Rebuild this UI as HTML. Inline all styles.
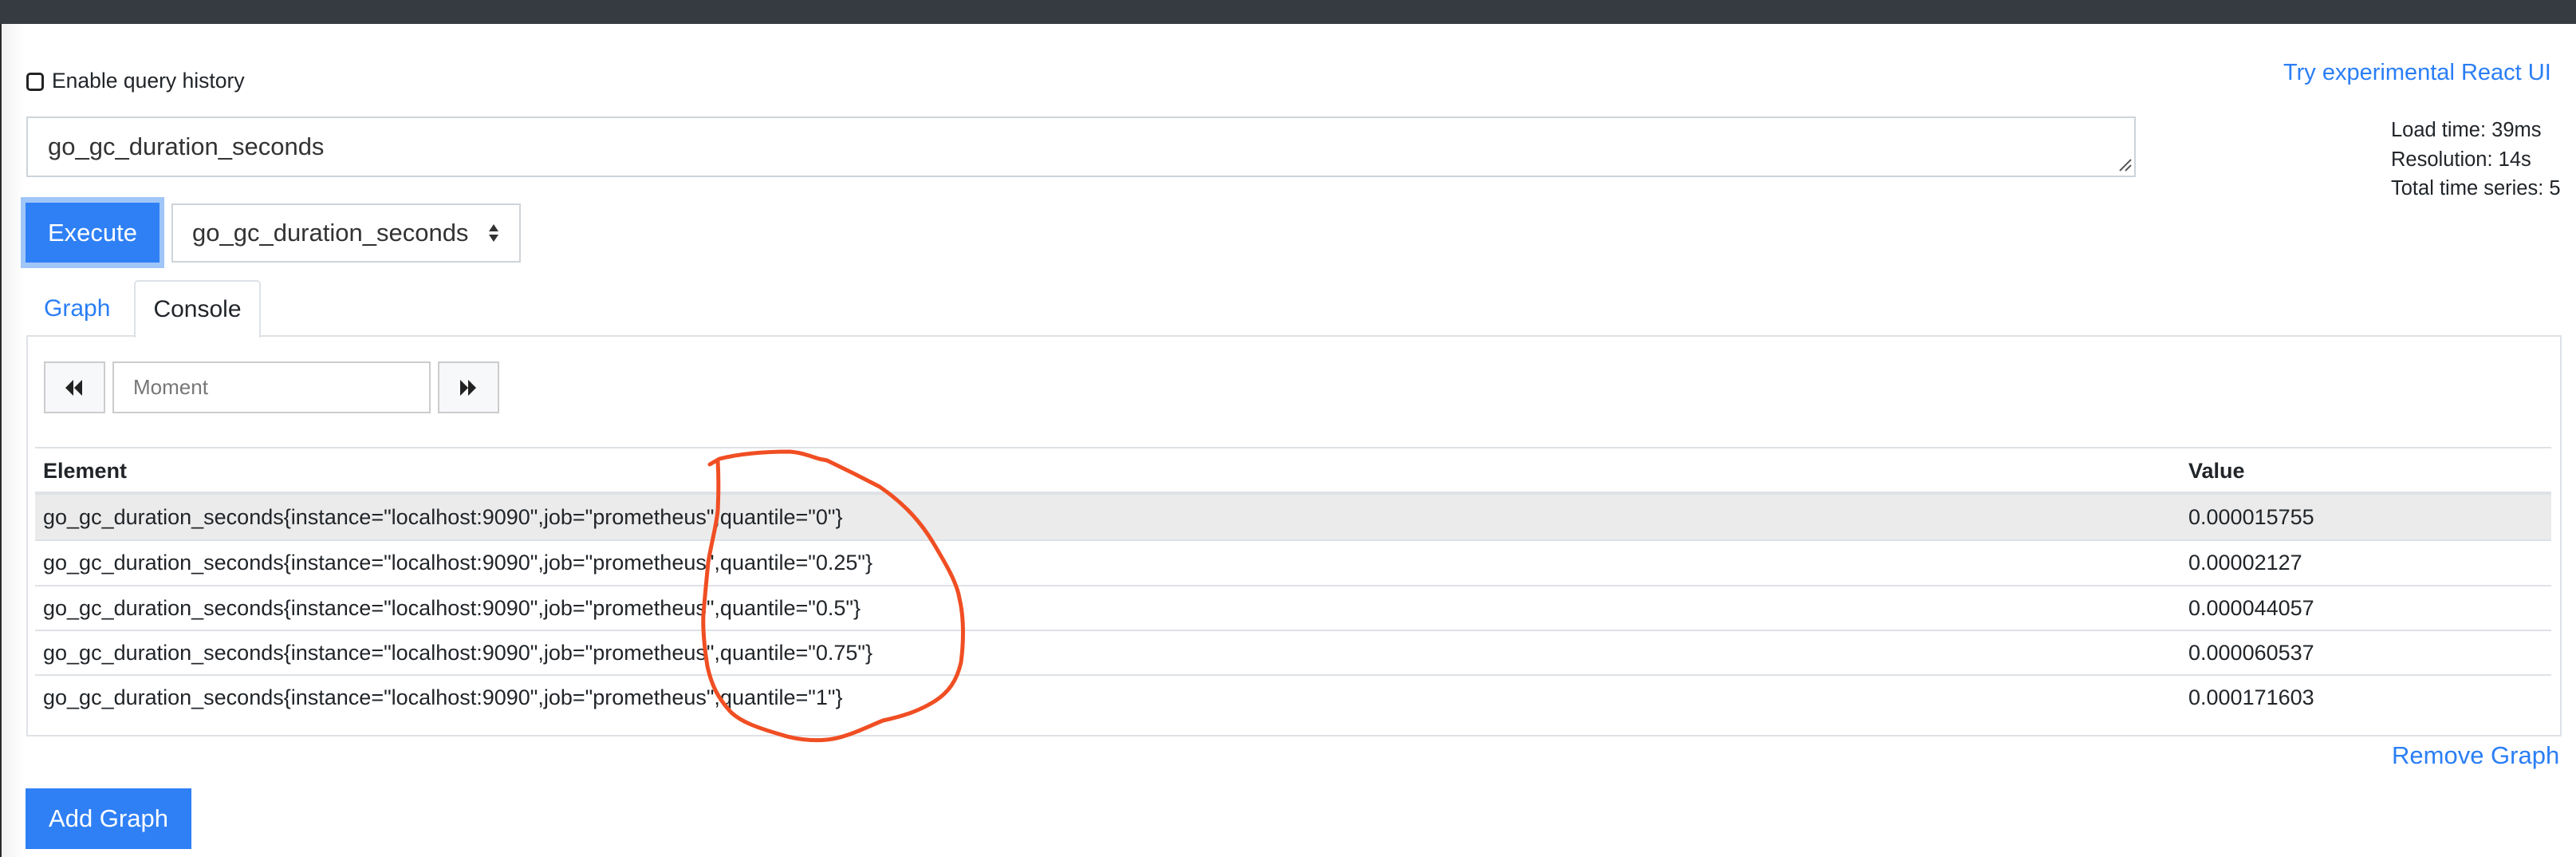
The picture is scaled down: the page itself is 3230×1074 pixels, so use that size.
<!DOCTYPE html>
<html><head><meta charset="utf-8"><style>
*{box-sizing:border-box;margin:0;padding:0}
body{width:3230px;height:1074px;overflow:hidden;background:#fff;font-family:"Liberation Sans",Helvetica,Arial,sans-serif;color:#212529;position:relative}
.abs{position:absolute}
.topbar{left:0;top:0;width:3230px;height:30px;background:#363a41}
.leftedge{left:0;top:30px;width:30px;height:1044px;background:linear-gradient(to right,#2a2a2a 0,#2a2a2a 2px,#f2f2f2 2px,#fff 30px)}
.blue{color:#2a7ef5}
.btn{background:#2f80f5;color:#fff;display:flex;align-items:center;justify-content:center}
.tr{position:absolute;left:44px;width:3155px;border-top:2px solid #dee2e6;height:57px;font-size:27px;line-height:55px}
.tr span{position:absolute}
.tr .e{left:10px}.tr .v{left:2700px}
</style></head><body>
<div class="abs topbar"></div>
<div class="abs leftedge"></div>

<div class="abs" style="left:33px;top:91px;width:22px;height:23px;border:3px solid #222;border-radius:5px"></div>
<div class="abs" style="left:65px;top:85px;font-size:26.5px;line-height:32px">Enable query history</div>
<div class="abs blue" style="left:2863px;top:74px;font-size:29px;line-height:34px">Try experimental React UI</div>

<div class="abs" style="left:33px;top:146px;width:2645px;height:76px;border:2px solid #ced4da;font-size:31px;line-height:72px;padding-left:25px;color:#333">go_gc_duration_seconds</div>
<svg class="abs" style="left:2656px;top:198px" width="18" height="18"><path d="M2 16L16 2M9 16L16 9" stroke="#555" stroke-width="2"/></svg>

<div class="abs" style="left:2998px;top:145px;font-size:25.5px;line-height:36.5px">Load time: 39ms<br>Resolution: 14s<br>Total time series: 5</div>

<div class="abs" style="left:26px;top:247px;width:180px;height:89px;background:#a0c6f8"></div>
<div class="abs btn" style="left:32px;top:254px;width:168px;height:75px;font-size:31px">Execute</div>
<div class="abs" style="left:215px;top:255px;width:438px;height:74px;border:2px solid #ced4da;font-size:31px;line-height:70px;padding-left:24px;color:#333">go_gc_duration_seconds</div>
<svg class="abs" style="left:612px;top:280px" width="14" height="24"><path d="M7 1L13 10H1ZM7 23L13 14H1Z" fill="#333"/></svg>

<div class="abs blue" style="left:55px;top:367px;font-size:30px;line-height:40px">Graph</div>
<div class="abs" style="left:33px;top:420px;width:3179px;border-top:2px solid #dee2e6"></div>
<div class="abs" style="left:168px;top:351px;width:159px;height:72px;border:2px solid #dee2e6;border-bottom:none;border-radius:5px 5px 0 0;background:#fff;font-size:30px;line-height:70px;text-align:center">Console</div>

<div class="abs" style="left:33px;top:421px;width:3179px;height:502px;border:2px solid #dee2e6;border-top:none"></div>

<div class="abs" style="left:55px;top:453px;width:77px;height:65px;border:2px solid #ccc;background:#f7f8fa"></div>
<svg class="abs" style="left:82px;top:476px" width="22" height="20"><path d="M10 0V20L0 10ZM21 0V20L11 10Z" fill="#222"/></svg>
<div class="abs" style="left:141px;top:453px;width:399px;height:65px;border:2px solid #ccc;font-size:26px;line-height:61px;padding-left:24px;color:#777">Moment</div>
<div class="abs" style="left:549px;top:453px;width:77px;height:65px;border:2px solid #ccc;background:#f7f8fa"></div>
<svg class="abs" style="left:576px;top:476px" width="22" height="20"><path d="M1 0V20L11 10ZM11 0V20L21 10Z" fill="#222"/></svg>

<div class="tr" style="top:560px;height:58px;font-weight:bold;line-height:56px"><span class="e">Element</span><span class="v">Value</span></div>
<div class="tr" style="top:616px;border-top:4px solid #dee2e6;background:#ebebeb;height:60px;line-height:56px"><span class="e">go_gc_duration_seconds{instance="localhost:9090",job="prometheus",quantile="0"}</span><span class="v">0.000015755</span></div>
<div class="tr" style="top:676px"><span class="e">go_gc_duration_seconds{instance="localhost:9090",job="prometheus",quantile="0.25"}</span><span class="v">0.00002127</span></div>
<div class="tr" style="top:733px"><span class="e">go_gc_duration_seconds{instance="localhost:9090",job="prometheus",quantile="0.5"}</span><span class="v">0.000044057</span></div>
<div class="tr" style="top:789px"><span class="e">go_gc_duration_seconds{instance="localhost:9090",job="prometheus",quantile="0.75"}</span><span class="v">0.000060537</span></div>
<div class="tr" style="top:845px"><span class="e">go_gc_duration_seconds{instance="localhost:9090",job="prometheus",quantile="1"}</span><span class="v">0.000171603</span></div>

<div class="abs blue" style="left:2999px;top:927px;font-size:31px;line-height:40px">Remove Graph</div>
<div class="abs btn" style="left:32px;top:988px;width:208px;height:76px;font-size:31px">Add Graph</div>

<svg class="abs" style="left:0;top:0" width="3230" height="1074"><path d="M890 582L902 575C930 568 960 566 990 566C1005 567 1017 572 1027 575L1037 577C1060 588 1080 598 1103 610C1135 632 1155 655 1170 680C1185 705 1200 730 1203 750C1208 770 1209 800 1205 830C1200 852 1190 868 1170 880C1150 892 1130 898 1107 903C1085 912 1060 925 1037 927C1015 929 995 926 977 920C950 912 930 905 917 893C900 875 892 858 887 835C883 810 881 790 882 770C884 745 886 725 888 705C892 680 898 660 900 640C901 620 901 595 900 577" fill="none" stroke="#f04e23" stroke-width="5" stroke-linecap="round" stroke-linejoin="round"/></svg>
</body></html>
